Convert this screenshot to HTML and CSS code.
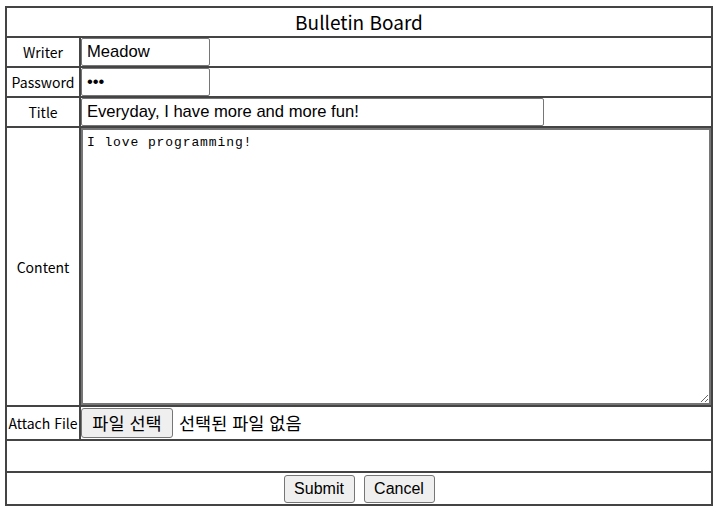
FILE: index.html
```html
<!DOCTYPE html>
<html lang="ko">
<head>
<meta charset="utf-8">
<title>Bulletin Board</title>
<link rel="stylesheet" href="styles.css">
</head>
<body>
<form class="board-form">
<table class="board">
  <tr class="row-head">
    <td colspan="2" class="heading">Bulletin Board</td>
  </tr>
  <tr class="row-field">
    <td class="label">Writer</td>
    <td class="field"><input class="text short" type="text" value="Meadow"></td>
  </tr>
  <tr class="row-field">
    <td class="label">Password</td>
    <td class="field"><input class="text short" type="password" value="abc"></td>
  </tr>
  <tr class="row-field">
    <td class="label">Title</td>
    <td class="field"><input class="text long" type="text" value="Everyday, I have more and more fun!"></td>
  </tr>
  <tr class="row-content">
    <td class="label">Content</td>
    <td class="field"><textarea class="content">I love programming!</textarea></td>
  </tr>
  <tr class="row-file">
    <td class="label">Attach File</td>
    <td class="field">
      <div class="file">
        <span class="file-btn">파일 선택</span>
        <span class="file-name">선택된 파일 없음</span>
      </div>
    </td>
  </tr>
  <tr class="row-blank">
    <td colspan="2"></td>
  </tr>
  <tr class="row-actions">
    <td colspan="2">
      <div class="actions">
        <button type="button" class="btn">Submit</button>
        <button type="button" class="btn">Cancel</button>
      </div>
    </td>
  </tr>
</table>
</form>
</body>
</html>
```
FILE: styles.css
```css
body {
  margin: 0;
  background: #fff;
  color: #000;
  font-family: "Noto Sans CJK KR", "Noto Sans", sans-serif;
}

.board-form {
  margin: 0;
}

.board {
  border-collapse: collapse;
  width: 708px;
  margin: 6px 0 0 5px;
  border: 2px solid #444;
}

.board td {
  border: 2px solid #444;
  padding: 0;
}

.row-head { height: 30px; }
.row-field { height: 30px; }
.row-content { height: 279px; }
.row-file { height: 34px; }
.row-blank { height: 32px; }
.row-actions { height: 33px; }

.heading {
  text-align: center;
  font-size: 19px;
  line-height: 26px;
  padding-top: 1px;
}

.label {
  width: 72px;
  text-align: center;
  font-size: 14px;
  white-space: nowrap;
  line-height: 20px;
}

.field {
  line-height: 0;
}

.text {
  box-sizing: border-box;
  height: 28px;
  margin: 0;
  padding: 1px 5px;
  border: 1px solid #767676;
  border-radius: 2px;
  font-family: "Liberation Sans", Arial, sans-serif;
  font-size: 16.6px;
  color: #000;
  background: #fff;
}

.short { width: 129px; }
.long { width: 463px; }

.content {
  display: block;
  box-sizing: border-box;
  width: 100%;
  height: 277px;
  margin: 0;
  padding: 4px 4px;
  border: 2px solid #767676;
  border-radius: 0;
  font-family: "Liberation Mono", monospace;
  font-size: 13px;
  letter-spacing: 0.9px;
  line-height: 18px;
  resize: vertical;
}

.file {
  display: flex;
  align-items: center;
  gap: 6px;
  line-height: normal;
}

.file-btn {
  box-sizing: border-box;
  height: 30px;
  width: 92px;
  display: flex;
  align-items: center;
  justify-content: center;
  background: #efefef;
  border: 1px solid #767676;
  border-radius: 3px;
  font-size: 17.5px;
  line-height: 24px;
}

.file-name {
  font-size: 17.5px;
  line-height: 24px;
}

.actions {
  display: flex;
  justify-content: center;
  gap: 9px;
  padding-top: 1px;
}

.btn {
  box-sizing: border-box;
  height: 28px;
  width: 71px;
  margin: 0;
  padding: 0 6px;
  background: #efefef;
  border: 1px solid #767676;
  border-radius: 3px;
  font-family: "Liberation Sans", Arial, sans-serif;
  font-size: 16px;
  color: #000;
}
```
